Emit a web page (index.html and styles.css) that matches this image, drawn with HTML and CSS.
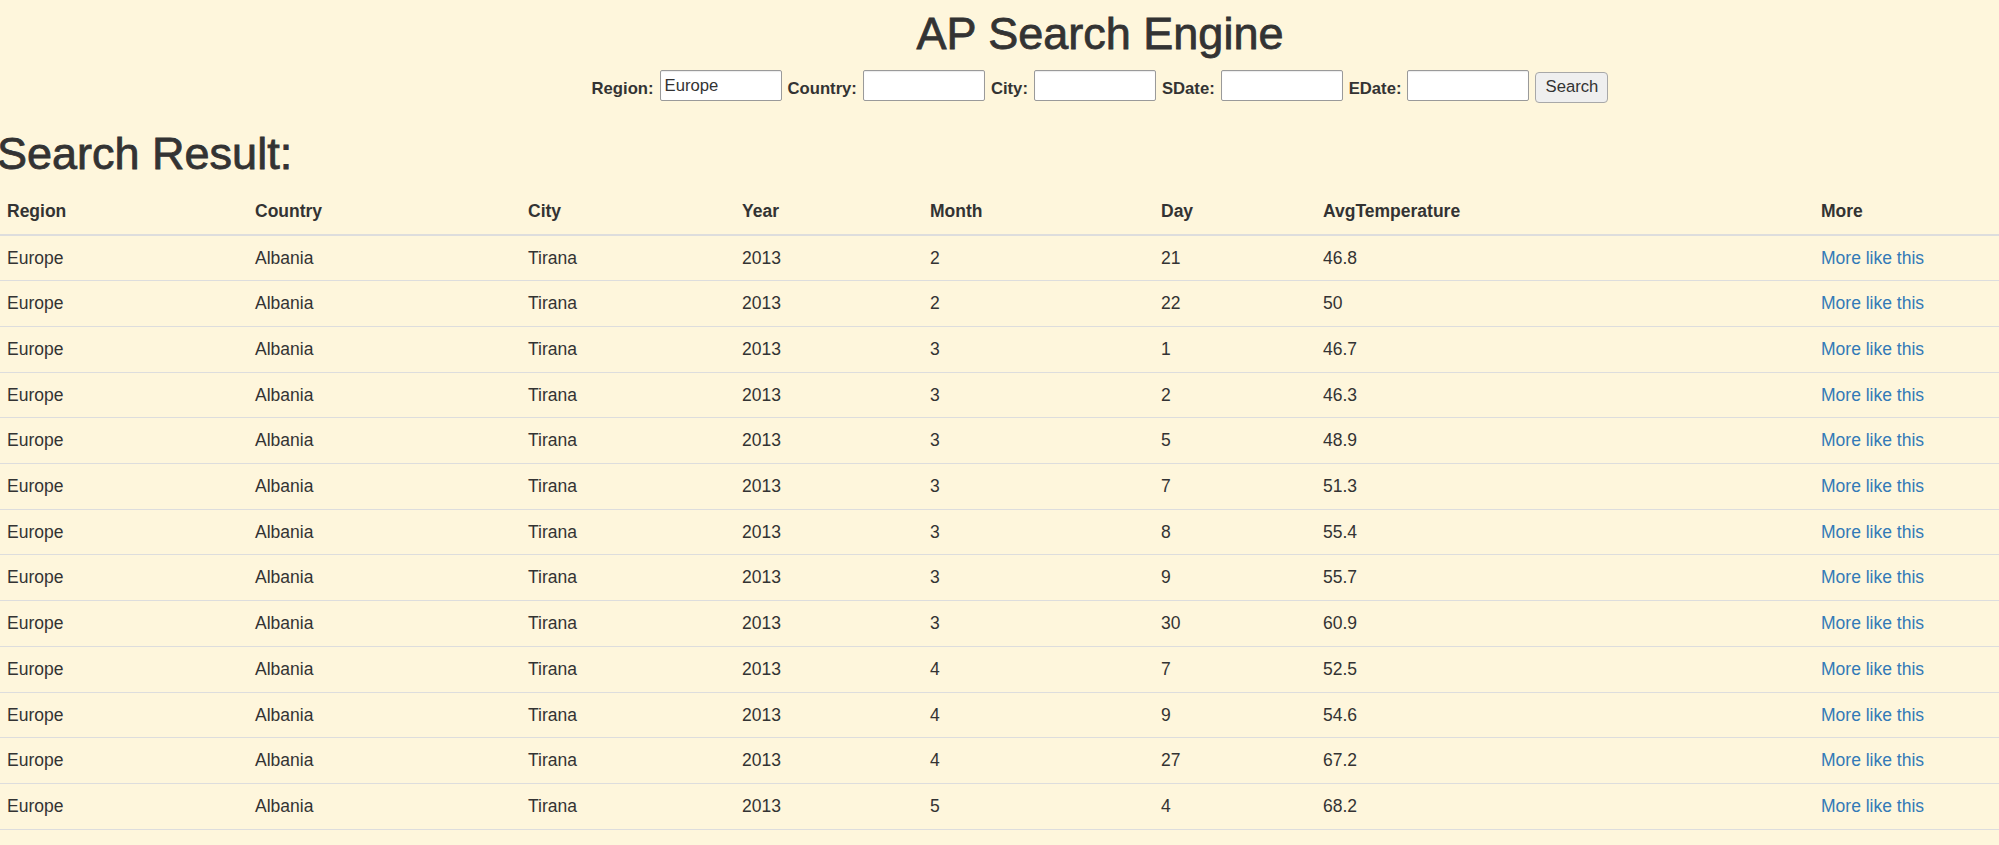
FILE: index.html
```html
<!DOCTYPE html>
<html lang="en">
<head>
<meta charset="utf-8">
<title>AP Search Engine</title>
<link rel="stylesheet" href="styles.css">
</head>
<body>
<div class="page">
  <header class="masthead">
    <h1 class="title">AP Search Engine</h1>
    <form class="search-form">
      <label class="field-label" for="region">Region:</label>
      <input class="field-input" id="region" type="text" value="Europe">
      <label class="field-label" for="country">Country:</label>
      <input class="field-input" id="country" type="text">
      <label class="field-label" for="city">City:</label>
      <input class="field-input" id="city" type="text">
      <label class="field-label" for="sdate">SDate:</label>
      <input class="field-input" id="sdate" type="text">
      <label class="field-label" for="edate">EDate:</label>
      <input class="field-input" id="edate" type="text">
      <button class="search-btn" type="button">Search</button>
    </form>
  </header>

  <h1 class="result-title">Search Result:</h1>

  <table class="results">
    <colgroup>
      <col class="c-region"><col class="c-country"><col class="c-city"><col class="c-year">
      <col class="c-month"><col class="c-day"><col class="c-temp"><col class="c-more">
    </colgroup>
    <thead>
      <tr><th>Region</th><th>Country</th><th>City</th><th>Year</th><th>Month</th><th>Day</th><th>AvgTemperature</th><th>More</th></tr>
    </thead>
    <tbody>
      <tr><td>Europe</td><td>Albania</td><td>Tirana</td><td>2013</td><td>2</td><td>21</td><td>46.8</td><td><a href="#">More like this</a></td></tr>
      <tr><td>Europe</td><td>Albania</td><td>Tirana</td><td>2013</td><td>2</td><td>22</td><td>50</td><td><a href="#">More like this</a></td></tr>
      <tr><td>Europe</td><td>Albania</td><td>Tirana</td><td>2013</td><td>3</td><td>1</td><td>46.7</td><td><a href="#">More like this</a></td></tr>
      <tr><td>Europe</td><td>Albania</td><td>Tirana</td><td>2013</td><td>3</td><td>2</td><td>46.3</td><td><a href="#">More like this</a></td></tr>
      <tr><td>Europe</td><td>Albania</td><td>Tirana</td><td>2013</td><td>3</td><td>5</td><td>48.9</td><td><a href="#">More like this</a></td></tr>
      <tr><td>Europe</td><td>Albania</td><td>Tirana</td><td>2013</td><td>3</td><td>7</td><td>51.3</td><td><a href="#">More like this</a></td></tr>
      <tr><td>Europe</td><td>Albania</td><td>Tirana</td><td>2013</td><td>3</td><td>8</td><td>55.4</td><td><a href="#">More like this</a></td></tr>
      <tr><td>Europe</td><td>Albania</td><td>Tirana</td><td>2013</td><td>3</td><td>9</td><td>55.7</td><td><a href="#">More like this</a></td></tr>
      <tr><td>Europe</td><td>Albania</td><td>Tirana</td><td>2013</td><td>3</td><td>30</td><td>60.9</td><td><a href="#">More like this</a></td></tr>
      <tr><td>Europe</td><td>Albania</td><td>Tirana</td><td>2013</td><td>4</td><td>7</td><td>52.5</td><td><a href="#">More like this</a></td></tr>
      <tr><td>Europe</td><td>Albania</td><td>Tirana</td><td>2013</td><td>4</td><td>9</td><td>54.6</td><td><a href="#">More like this</a></td></tr>
      <tr><td>Europe</td><td>Albania</td><td>Tirana</td><td>2013</td><td>4</td><td>27</td><td>67.2</td><td><a href="#">More like this</a></td></tr>
      <tr><td>Europe</td><td>Albania</td><td>Tirana</td><td>2013</td><td>5</td><td>4</td><td>68.2</td><td><a href="#">More like this</a></td></tr>
      <tr><td>Europe</td><td>Albania</td><td>Tirana</td><td>2013</td><td>5</td><td>5</td><td>71.3</td><td><a href="#">More like this</a></td></tr>
    </tbody>
  </table>
</div>
</body>
</html>
```

FILE: styles.css
```css
html, body {
  margin: 0;
  padding: 0;
  overflow: hidden;
  background: #fef6dc;
}

body {
  font-family: "Liberation Sans", Arial, Helvetica, sans-serif;
  font-size: 17.5px;
  line-height: 25px;
  color: #333333;
}

.page {
  width: 2206px;
  margin-left: -3px;
}

.masthead {
  text-align: center;
}

.title {
  margin: 9px 0 0;
  font-size: 45px;
  line-height: 49.5px;
  font-weight: 500;
  color: #333333;
  -webkit-text-stroke: 0.8px #333333;
}

.search-form {
  margin-top: 11.5px;
  display: flex;
  justify-content: center;
  align-items: flex-start;
  gap: 6px;
}

.field-label {
  font-size: 16.67px;
  font-weight: bold;
  line-height: 31px;
  padding-top: 3px;
  height: 28px;
}

.field-input {
  box-sizing: border-box;
  width: 122px;
  height: 31px;
  margin: 0;
  padding: 0 4px;
  border: 1px solid #9a9a9a;
  border-radius: 2px;
  background: #ffffff;
  font-family: "Liberation Sans", Arial, sans-serif;
  font-size: 16.67px;
  color: #333333;
  box-shadow: inset 0 1px 1px rgba(0, 0, 0, 0.08);
}

.search-btn {
  box-sizing: border-box;
  margin: 2px 0 0;
  width: 73px;
  height: 31px;
  padding: 0 0 1px;
  border: 1px solid #a8a8a8;
  border-radius: 4px;
  background: #efefef;
  font-family: "Liberation Sans", Arial, sans-serif;
  font-size: 16.67px;
  color: #333333;
}

.result-title {
  margin: 26px 0 10px;
  font-size: 45px;
  line-height: 49.5px;
  font-weight: 500;
  color: #333333;
  -webkit-text-stroke: 0.8px #333333;
}

.results {
  width: 100%;
  table-layout: fixed;
  border-collapse: separate;
  border-spacing: 0;
}

.c-region { width: 248px; }
.c-country { width: 273px; }
.c-city { width: 214px; }
.c-year { width: 188px; }
.c-month { width: 231px; }
.c-day { width: 162px; }
.c-temp { width: 498px; }
.c-more { width: auto; }

.results th,
.results td {
  padding: 10px;
  text-align: left;
  vertical-align: top;
}

.results th {
  padding-top: 10.5px;
  padding-bottom: 9.5px;
  line-height: 25px;
  font-weight: bold;
  border-bottom: 2px solid #dddddd;
}

.results td {
  line-height: 24.7px;
  border-bottom: 1px solid #dddddd;
}

.results a {
  color: #337ab7;
  text-decoration: none;
}
```
